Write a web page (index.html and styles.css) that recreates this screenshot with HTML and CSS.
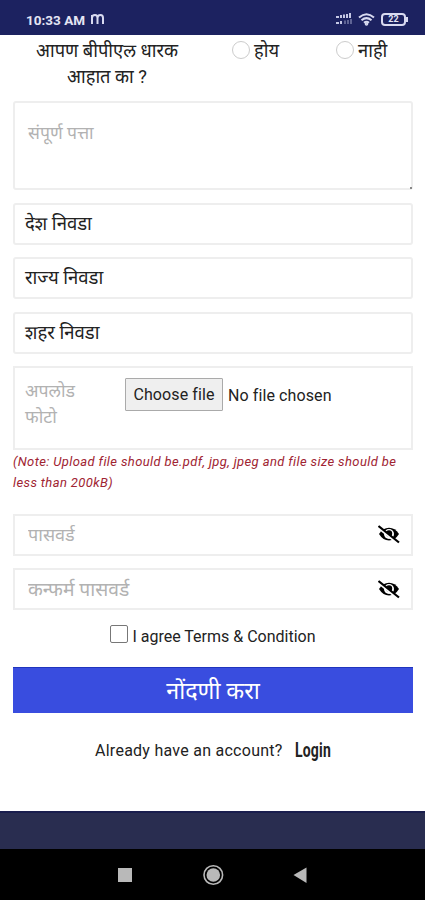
FILE: index.html
```html
<!DOCTYPE html>
<html lang="mr">
<head>
    <meta charset="UTF-8">
    <meta name="viewport" content="width=device-width, initial-scale=1.0">
    <title>नोंदणी</title>
    <link rel="stylesheet" href="styles.css">
</head>
<body>
    <header class="status-bar">
        <span class="clock">10:33 AM</span>
        <svg class="app-mark" width="13" height="10" viewBox="0 0 13 10" fill="none" stroke="#d8daf0" stroke-width="2"><path d="M1 10V1M1 4Q1 1 4 1Q6.500 1 6.500 4V10M6.500 4Q6.500 1 9.500 1Q12 1 12 4V10"/></svg>
        <svg class="signal" width="18" height="13" viewBox="0 0 18 13" fill="#c5c8e5"><path d="M1 3h3v2H1zM5 2h2v3H5zM8 1.500h2V5H8zM11 1h2v4h-2zM14 0h2v5h-2zM1 9h3v2H1zM5 8h2v3H5z"/><path opacity=".4" d="M9 7.500h2V11H9zM12 7h2v4h-2zM15 6h2v5h-2z"/></svg>
        <svg class="wifi" width="17" height="13" viewBox="0 0 17 13" fill="none" stroke="#d8daf0" stroke-width="2"><path d="M1 4.500Q8.500-2 16 4.500M3.500 7.300Q8.500 3 13.500 7.300M6 9.800Q8.500 7.700 11 9.800"/><circle cx="8.500" cy="11" r=".8"/></svg>
        <span class="battery">22</span>
        <span class="battery-tip"></span>
    </header>

    <main class="page">
        <form id="register-form">
            <div class="bpl-row">
                <div class="question">आपण बीपीएल धारक<br>आहात का ?</div>
                <label class="radio"><input type="radio" name="bpl"><span>होय</span></label>
                <label class="radio"><input type="radio" name="bpl"><span>नाही</span></label>
            </div>

            <div class="address-wrap">
                <textarea class="field address" placeholder="संपूर्ण पत्ता"></textarea>
                <span class="grip"></span>
            </div>
            <div class="field select">देश निवडा</div>
            <div class="field select">राज्य निवडा</div>
            <div class="field select">शहर निवडा</div>

            <div class="field upload">
                <span class="upload-label">अपलोड फोटो</span>
                <button type="button" class="choose">Choose file</button>
                <span class="file-name">No file chosen</span>
            </div>
            <p class="note">(Note: Upload file should be.pdf, jpg, jpeg and file size should be<br>less than 200kB)</p>

            <div class="field password">
                <input type="text" class="pass" placeholder="पासवर्ड">
                <svg width="22" height="19" viewBox="0 0 22 19"><path d="M1 9Q5 2.800 11 2.800T21 9Q17 15.500 11 15.500T1 9Z"/><circle cx="11" cy="9" r="5" fill="#fff"/><circle cx="11" cy="8.500" r="3.200"/><path d="M1 2.800L20 18.300" stroke="#fff" stroke-width="3"/><path d="M.5 1L21 17.500" stroke="#000" stroke-width="2.200"/></svg>
            </div>
            <div class="field password">
                <input type="text" class="confirm" placeholder="कन्फर्म पासवर्ड">
                <svg width="22" height="19" viewBox="0 0 22 19"><path d="M1 9Q5 2.800 11 2.800T21 9Q17 15.500 11 15.500T1 9Z"/><circle cx="11" cy="9" r="5" fill="#fff"/><circle cx="11" cy="8.500" r="3.200"/><path d="M1 2.800L20 18.300" stroke="#fff" stroke-width="3"/><path d="M.5 1L21 17.500" stroke="#000" stroke-width="2.200"/></svg>
            </div>

            <label class="terms"><input type="checkbox"><span>I agree Terms &amp; Condition</span></label>
            <button type="button" class="submit">नोंदणी करा</button>
        </form>
        <div class="account"><span>Already have an account?</span><a class="login">Login</a></div>
    </main>

    <div class="footer-strip"></div>
    <nav class="nav-bar">
        <svg width="425" height="51" viewBox="0 0 425 51" fill="#b9b9b9"><rect x="118" y="19" width="14" height="14"/><circle cx="213.300" cy="26" r="9.300" fill="none" stroke="#b9b9b9" stroke-width="1.600"/><circle cx="213.300" cy="26" r="6.800"/><path d="M293.500 26L306.500 18.500V34Z"/></svg>
    </nav>
</body>
</html>
```

FILE: styles.css
```css
* {
    box-sizing: border-box;
}
body {
    margin: 0;
    width: 425px;
    height: 900px;
    overflow: hidden;
    display: flex;
    flex-direction: column;
    background: #fff;
    color: #222;
    font-family: Roboto, "Noto Sans Devanagari", "Noto Sans", sans-serif;
    font-size: 16px;
}
.status-bar {
    height: 35px;
    flex: none;
    background: #1c2260;
    color: #e4e5f4;
    display: flex;
    align-items: center;
    padding: 4px 17px 0 26px;
}
.clock {
    font-size: 13.5px;
    font-weight: 700;
    width: 65px;
    white-space: nowrap;
}
.app-mark {
    margin-bottom: 2px;
}
.signal {
    margin-left: auto;
    margin-right: 5px;
}
.battery {
    width: 25px;
    height: 13px;
    margin-left: 6px;
    border: 2px solid #d8daf0;
    border-radius: 4px;
    font-size: 9px;
    line-height: 9px;
    font-weight: 700;
    text-align: center;
}
.battery-tip {
    width: 2px;
    height: 5px;
    background: #d8daf0;
}
.page {
    height: 776px;
    flex: none;
    padding: 0 12px 0 13px;
}
.bpl-row {
    display: grid;
    grid-template-columns: 219px 104px 1fr;
    height: 66px;
    padding-top: 3px;
    line-height: 26px;
    font-size: 18.3px;
}
.question {
    width: 188px;
    text-align: center;
    white-space: nowrap;
}
.radio {
    display: flex;
    align-items: center;
    height: 26px;
    gap: 4px;
}
.radio input {
    appearance: none;
    width: 18px;
    height: 18px;
    margin: 0 0 2px;
    border: 1px solid #ccc;
    border-radius: 50%;
    flex: none;
}
.field {
    display: flex;
    width: 400px;
    height: 42px;
    margin: 0 0 12.3px;
    border: 2px solid #eee;
    border-radius: 3px;
    background: #fff;
}
.address-wrap {
    position: relative;
    height: 102px;
}
.address {
    height: 89px;
    padding: 17px 13px;
    font: inherit;
    font-size: 17.6px;
    line-height: 26px;
    resize: none;
}
.grip {
    position: absolute;
    right: 1px;
    bottom: 14px;
    width: 2px;
    height: 2px;
    background: #888;
}
::placeholder {
    color: #b2b2b2;
    opacity: 1;
}
.select {
    align-items: center;
    padding: 3px 10px 0;
    font-size: 18.5px;
}
.upload {
    height: 84px;
    margin-bottom: 0;
    padding: 10px;
    border-radius: 0;
}
.upload-label {
    width: 100px;
    padding-right: 35px;
    color: #b2b2b2;
    font-size: 17.7px;
    line-height: 26px;
}
.choose {
    width: 98px;
    height: 33px;
    padding: 0;
    border: 1px solid #aaa;
    border-radius: 1px;
    background: #efefef;
    color: #222;
    font: 16px Roboto, sans-serif;
    letter-spacing: .1px;
}
.file-name {
    margin-left: 5px;
    line-height: 35px;
    letter-spacing: .1px;
}
.note {
    height: 64px;
    margin: 0;
    padding-top: 1px;
    color: #a02432;
    font-size: 13px;
    font-style: italic;
    line-height: 21px;
    letter-spacing: .38px;
    white-space: nowrap;
}
.password {
    align-items: center;
    padding: 0 11px 0 13px;
    border-radius: 0;
}
.password input {
    flex: 1;
    min-width: 0;
    height: 36px;
    padding: 0;
    border: 0;
    font: inherit;
    font-size: 18px;
}
.password .confirm {
    font-size: 19.3px;
}
.terms {
    display: flex;
    justify-content: center;
    align-items: center;
    gap: 4px;
    height: 28px;
    margin-bottom: 17px;
}
.terms input {
    appearance: none;
    width: 18px;
    height: 18px;
    margin: 0 0 5px;
    border: 1px solid #777;
    border-radius: 2px;
}
.submit {
    display: block;
    width: 400px;
    height: 46px;
    padding: 0;
    border: 0;
    border-top: 1px solid #2035bd;
    background: #394ddf;
    color: #fff;
    font: inherit;
    font-size: 23.3px;
    line-height: 44px;
}
.account {
    display: flex;
    align-items: center;
    height: 24px;
    margin-top: 25px;
    padding-left: 82px;
    letter-spacing: .26px;
    white-space: nowrap;
}
.login {
    margin-left: 12px;
    font-size: 20px;
    font-weight: 700;
    transform: scaleX(.7);
    transform-origin: left;
}
.footer-strip {
    height: 38px;
    flex: none;
    border-top: 2px solid #191d4d;
    background: #292d50;
}
.nav-bar {
    height: 51px;
    flex: none;
    background: #000;
}
.nav-bar svg {
    display: block;
}
```
